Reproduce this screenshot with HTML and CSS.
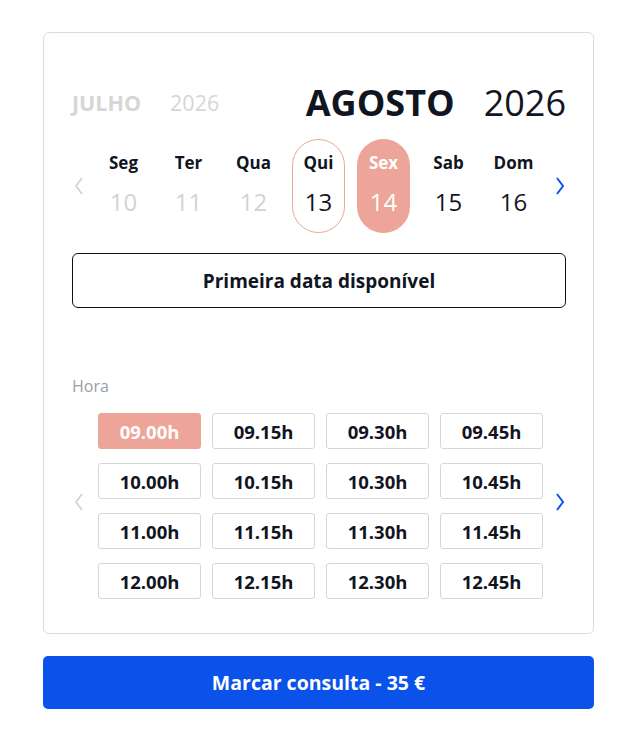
FILE: index.html
```html
<!DOCTYPE html>
<html lang="pt">
<head>
<meta charset="utf-8">
<title>Marcar consulta</title>
<link rel="stylesheet" href="styles.css">
</head>
<body>
<div class="page">
  <div class="card">
    <div class="months">
      <div class="month month-prev"><span class="m-name">JULHO</span><span class="m-year">2026</span></div>
      <div class="month month-cur"><span class="m-name">AGOSTO</span><span class="m-year">2026</span></div>
    </div>
    <div class="days">
      <span class="chev chev-off"><svg width="10" height="18" viewBox="0 0 10 18"><polyline points="8,1 2,9 8,17" fill="none" stroke="#cfcfcf" stroke-width="1.6"/></svg></span>
      <div class="day past"><span class="dn">Seg</span><span class="dd">10</span></div>
      <div class="day past"><span class="dn">Ter</span><span class="dd">11</span></div>
      <div class="day past"><span class="dn">Qua</span><span class="dd">12</span></div>
      <div class="day today"><span class="dn">Qui</span><span class="dd">13</span></div>
      <div class="day sel"><span class="dn">Sex</span><span class="dd">14</span></div>
      <div class="day"><span class="dn">Sab</span><span class="dd">15</span></div>
      <div class="day"><span class="dn">Dom</span><span class="dd">16</span></div>
      <span class="chev chev-on"><svg width="10" height="18" viewBox="0 0 10 18"><polyline points="2,1 8,9 2,17" fill="none" stroke="#0b52ea" stroke-width="2"/></svg></span>
    </div>
    <button class="first">Primeira data disponível</button>
    <div class="hora">Hora</div>
    <div class="times">
      <span class="chev chev-off tchev"><svg width="10" height="18" viewBox="0 0 10 18"><polyline points="8,1 2,9 8,17" fill="none" stroke="#cfcfcf" stroke-width="1.6"/></svg></span>
      <div class="grid">
        <div class="slot sel">09.00h</div>
        <div class="slot">09.15h</div>
        <div class="slot">09.30h</div>
        <div class="slot">09.45h</div>
        <div class="slot">10.00h</div>
        <div class="slot">10.15h</div>
        <div class="slot">10.30h</div>
        <div class="slot">10.45h</div>
        <div class="slot">11.00h</div>
        <div class="slot">11.15h</div>
        <div class="slot">11.30h</div>
        <div class="slot">11.45h</div>
        <div class="slot">12.00h</div>
        <div class="slot">12.15h</div>
        <div class="slot">12.30h</div>
        <div class="slot">12.45h</div>
      </div>
      <span class="chev chev-on tchev"><svg width="10" height="18" viewBox="0 0 10 18"><polyline points="2,1 8,9 2,17" fill="none" stroke="#0b52ea" stroke-width="2"/></svg></span>
    </div>
  </div>
  <button class="cta">Marcar consulta - 35 €</button>
</div>
</body>
</html>
```

FILE: styles.css
```css
* { box-sizing: border-box; }
html, body { margin: 0; padding: 0; background: #fff; }
body { font-family: "Open Sans", "DejaVu Sans", sans-serif; color: #111522; }
.page { width: 551px; margin-left: 43px; padding-top: 32px; }
.card {
  border: 1px solid #dcdcdc;
  border-radius: 6px;
  padding: 45px 27px 34px 28px;
}
.months { display: flex; justify-content: space-between; align-items: center; height: 48px; }
.month { display: flex; align-items: center; }
.month-prev { color: #d6d6d6; font-size: 21.5px; gap: 29px; }
.month-prev .m-name { font-weight: 700; }
.month-cur { font-size: 36px; gap: 29px; color: #111522; }
.month-cur .m-name { font-weight: 700; }
.days { display: grid; grid-template-columns: 19px repeat(7, 65px) 19px; align-items: center; margin-top: 13px; }
.chev { display: flex; align-items: center; }
.chev-off { justify-content: flex-start; padding-left: 2px; }
.chev-on { justify-content: flex-end; }
.day {
  justify-self: center;
  width: 53px; height: 94px;
  border: 1px solid transparent;
  border-radius: 27px;
  display: flex; flex-direction: column; align-items: center;
  padding-top: 11px;
}
.dn { font-weight: 700; font-size: 17px; line-height: 24px; }
.dd { font-size: 24px; line-height: 32px; margin-top: 11px; }
.day.past .dd { color: #d3d3d3; }
.day.today { border-color: #eca598; }
.day.sel { background: #eca598; color: #fff; }
.first {
  display: block; width: 100%; height: 55px; margin-top: 20px;
  border: 1px solid #111; border-radius: 6px; background: #fff;
  font-family: inherit; font-weight: 700; font-size: 19px; color: #111522;
}
.hora { margin-top: 68px; font-size: 16px; line-height: 20px; color: #9a9ea6; }
.times { display: flex; align-items: center; margin-top: 17px; }
.tchev { width: 26px; margin-bottom: 8px; }
.times .chev-on { width: 22px; }
.grid { display: grid; grid-template-columns: repeat(4, 103px); column-gap: 11px; row-gap: 14px; }
.slot {
  height: 36px; border: 1px solid #d6d6d6; border-radius: 3px;
  display: flex; align-items: center; justify-content: center;
  font-weight: 700; font-size: 18.5px; color: #111522;
}
.slot.sel { background: #eca598; border-color: #eca598; color: #fff; }
.cta {
  display: block; width: 100%; height: 53px; margin-top: 22px;
  border: none; border-radius: 5px; background: #0b52eb; color: #fff;
  font-family: inherit; font-weight: 700; font-size: 19.5px;
}
```
